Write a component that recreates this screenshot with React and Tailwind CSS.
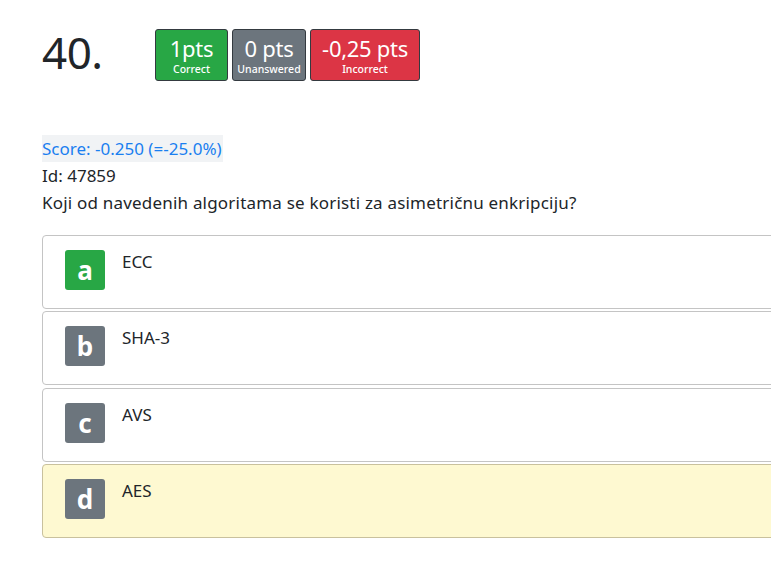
const points = [
  { value: "1pts", label: "Correct", color: "bg-[#28a745]", w: "w-[73px]" },
  { value: "0 pts", label: "Unanswered", color: "bg-[#6c757d]", w: "w-[74px]" },
  { value: "-0,25 pts", label: "Incorrect", color: "bg-[#dc3545]", w: "w-[110px]" },
];

const answers = [
  { letter: "a", text: "ECC", box: "bg-[#28a745]", card: "bg-white border-[#c4c4c4]" },
  { letter: "b", text: "SHA-3", box: "bg-[#6c757d]", card: "bg-white border-[#c4c4c4]" },
  { letter: "c", text: "AVS", box: "bg-[#6c757d]", card: "bg-white border-[#c4c4c4]" },
  { letter: "d", text: "AES", box: "bg-[#6c757d]", card: "bg-[#fef9d1] border-[#c9c19d]" },
];

export default function App() {
  return (
    <div
      className="w-[771px] h-[587px] overflow-hidden bg-white text-[#212529] pl-[42px]"
      style={{ fontFamily: '"Noto Sans", "Open Sans", sans-serif' }}
    >
      {/* HEADER */}
      <div className="flex items-start pt-[29px]">
        <h1 className="w-[113px] text-[44px] leading-none font-normal mt-[1px] tracking-[-0.5px]">40.</h1>
        <div className="flex gap-[4px]">
          {points.map((p) => (
            <div
              key={p.label}
              className={`${p.color} ${p.w} h-[52px] rounded-[3px] border border-[#343a40] text-white flex flex-col items-center pt-[5px]`}
            >
              <span className="text-[22px] leading-[26px] tracking-[-0.3px]">{p.value}</span>
              <span className="text-[10.5px] leading-[14px] mt-[1px] font-medium">{p.label}</span>
            </div>
          ))}
        </div>
      </div>

      {/* INFO */}
      <div className="mt-[54px] text-[17px] leading-[27px]">
        <div className="inline-block bg-[#f1f3f5] text-[#1a7ff0] pr-[1px]">Score: -0.250 (=-25.0%)</div>
        <div>Id: 47859</div>
        <div className="tracking-[0.2px]">Koji od navedenih algoritama se koristi za asimetričnu enkripciju?</div>
      </div>

      {/* ANSWERS */}
      <div className="mt-[19px] flex flex-col gap-[2.3px] w-[800px]">
        {answers.map((a) => (
          <div
            key={a.letter}
            className={`${a.card} border rounded-[4px] h-[74px] flex items-start pl-[22px] pt-[14px]`}
          >
            <div
              className={`${a.box} w-[40px] h-[40px] rounded-[3px] text-white text-[26px] font-bold flex items-center justify-center leading-none`}
            >
              {a.letter}
            </div>
            <div className="ml-[17px] text-[17px] leading-[27px] -mt-[2px]">{a.text}</div>
          </div>
        ))}
      </div>
    </div>
  );
}
